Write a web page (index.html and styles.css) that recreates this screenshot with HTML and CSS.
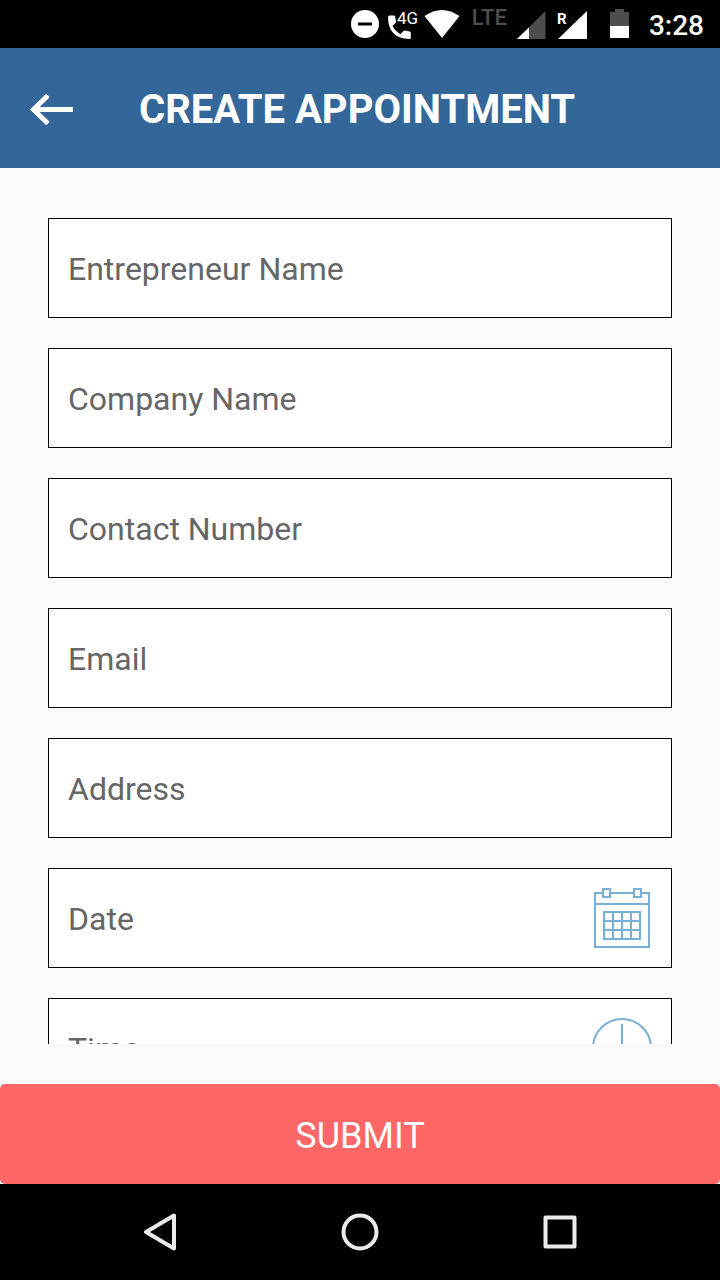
FILE: index.html
```html
<!DOCTYPE html>
<html lang="en">
<head>
<meta charset="utf-8">
<meta name="viewport" content="width=device-width, initial-scale=1">
<title>Create Appointment</title>
<link rel="stylesheet" href="styles.css">
</head>
<body>
<div class="app">
  <div class="status-bar">
    <svg class="icon" width="28" height="48" viewBox="0 0 28 48" aria-hidden="true">
      <circle cx="14" cy="24" r="14" fill="#fff"/>
      <path d="M7 24h14" stroke="#000" stroke-width="3"/>
    </svg>
    <svg class="icon" width="30" height="48" viewBox="0 0 30 48" aria-label="4G call">
      <path d="M2.500 15.500H7q1 0 1.100 1l.9 5q.1.900-.5 1.500l-3 3q3 5.500 8 8l3-3q.6-.6 1.500-.4l4.800 1q1 .2 1 1.200v5q0 1.200-1.200 1.200Q1 38.500 1 17q0-1.500 1.500-1.500Z" fill="#fff"/>
      <text class="tag-4g" x="10" y="24">4G</text>
    </svg>
    <svg class="icon" width="36" height="48" viewBox="0 0 36 48" aria-hidden="true">
      <path d="M17 38 -.5 16Q17 4 34.500 16Z" fill="#fff"/>
    </svg>
    <span class="network">LTE</span>
    <svg class="icon" width="29" height="48" viewBox="0 0 29 48" aria-hidden="true">
      <path d="M0 39 28.500 11V39Z" fill="#4d4d4d"/>
      <path d="M0 39 12 27.400V39Z" fill="#fff"/>
    </svg>
    <svg class="icon roaming" width="30" height="48" viewBox="0 0 30 48" aria-label="Roaming signal">
      <path d="M0 39 29 11V39Z" fill="#fff"/>
      <text class="tag-r" x="-1" y="24">R</text>
    </svg>
    <svg class="icon battery" width="20" height="48" viewBox="0 0 20 48" aria-hidden="true">
      <path d="M0 26V12H5V9H14V12H19V26Z" fill="#4d4d4d"/>
      <path d="M0 26H19V38H0Z" fill="#fff"/>
    </svg>
    <time class="clock">3:28</time>
  </div>

  <header class="toolbar">
    <button class="back" type="button" aria-label="Back">
      <svg class="icon" width="44" height="32" viewBox="0 0 44 32" aria-hidden="true">
        <path d="M43 15.500H4M18 1.500 3.500 15.500 18 29.500" fill="none" stroke="#fff" stroke-width="5"/>
      </svg>
    </button>
    <h1 class="title">CREATE APPOINTMENT</h1>
  </header>

  <form class="form">
    <div class="fields">
      <div class="field"><input class="input" type="text" placeholder="Entrepreneur Name" aria-label="Entrepreneur Name"></div>
      <div class="field"><input class="input" type="text" placeholder="Company Name" aria-label="Company Name"></div>
      <div class="field"><input class="input" type="tel" placeholder="Contact Number" aria-label="Contact Number"></div>
      <div class="field"><input class="input" type="email" placeholder="Email" aria-label="Email"></div>
      <div class="field"><input class="input" type="text" placeholder="Address" aria-label="Address"></div>
      <div class="field">
        <input class="input" type="text" placeholder="Date" aria-label="Date">
        <svg class="icon" width="60" height="60" viewBox="0 0 60 60" fill="none" stroke="#78afd7" stroke-width="2" aria-hidden="true">
          <path d="M10 5H3V59H57V5H49M18 5H41M3 16H57M11 1H18V9H11ZM42 1H49V9H42Z"/>
          <path d="M12 24H48V51H12ZM21 24V51M30 24V51M39 24V51M12 33H48M12 42H48"/>
        </svg>
      </div>
      <div class="field">
        <input class="input" type="text" placeholder="Time" aria-label="Time">
        <svg class="icon" width="60" height="60" viewBox="0 0 60 60" fill="none" stroke="#78afd7" stroke-width="2" aria-hidden="true">
          <circle cx="30" cy="30" r="29"/>
          <path d="M30 6V30H44"/>
        </svg>
      </div>
    </div>
    <button class="submit" type="submit">SUBMIT</button>
  </form>

  <nav class="nav-bar">
    <button class="nav-button" type="button" aria-label="Back">
      <svg class="icon" width="40" height="40" viewBox="0 0 40 40" fill="none" stroke="#ebebeb" stroke-width="4" stroke-linejoin="round" aria-hidden="true"><path d="M34 3.500V36.500L6 20Z"/></svg>
    </button>
    <button class="nav-button" type="button" aria-label="Home">
      <svg class="icon" width="40" height="40" viewBox="0 0 40 40" fill="none" stroke="#ebebeb" stroke-width="4" aria-hidden="true"><circle cx="20" cy="20" r="16.500"/></svg>
    </button>
    <button class="nav-button" type="button" aria-label="Recent apps">
      <svg class="icon" width="40" height="40" viewBox="0 0 40 40" fill="none" stroke="#ebebeb" stroke-width="4" stroke-linejoin="round" aria-hidden="true"><path d="M5.500 5.500H34.500V34.500H5.500Z"/></svg>
    </button>
  </nav>
</div>
</body>
</html>
```
FILE: styles.css
```css
* {
  box-sizing: border-box;
}

body {
  margin: 0;
  background: #fafafa;
  font-family: Roboto, "Liberation Sans", sans-serif;
}

button {
  border: 0;
  padding: 0;
  background: none;
  font: inherit;
  color: inherit;
  cursor: pointer;
}

.icon {
  display: block;
  flex: none;
  overflow: visible;
}

.app {
  display: flex;
  flex-direction: column;
  height: 100vh;
}

.status-bar {
  display: flex;
  flex: none;
  align-items: center;
  justify-content: flex-end;
  gap: 8px;
  height: 48px;
  padding-right: 16px;
  background: #000;
  color: #fff;
}

.tag-4g {
  fill: #fff;
  font-size: 17px;
}

.tag-r {
  fill: #fff;
  font-size: 15px;
  font-weight: 700;
}

.network {
  padding: 0 2px 12px 3px;
  color: #4d4d4d;
  font-size: 22px;
  font-weight: 500;
  line-height: 24px;
}

.roaming {
  margin-left: 4px;
}

.battery {
  margin: 0 11px 0 14px;
}

.clock {
  padding-top: 3px;
  font-size: 28px;
  font-weight: 500;
  line-height: 45px;
}

.toolbar {
  display: flex;
  flex: none;
  align-items: center;
  gap: 65px;
  height: 120px;
  padding: 4px 30px 0;
  background: #336699;
  color: #fff;
}

.title {
  margin: 0;
  font-size: 40px;
  font-weight: 700;
  line-height: 48px;
}

.form {
  display: flex;
  flex: 1;
  flex-direction: column;
  gap: 40px;
  min-height: 0;
}

.fields {
  display: flex;
  flex: 1;
  flex-direction: column;
  gap: 30px;
  min-height: 0;
  padding: 50px 48px;
  overflow-y: auto;
  scrollbar-width: none;
}

.field {
  display: flex;
  flex: none;
  align-items: center;
  height: 100px;
  padding: 0 19px;
  border: 1px solid #000;
  background: #fff;
}

.input {
  flex: 1;
  min-width: 0;
  height: 98px;
  padding: 2px 0 0;
  border: 0;
  outline: 0;
  background: none;
  color: #222;
  font: inherit;
  font-size: 32px;
}

.input::placeholder {
  color: #666;
  opacity: 1;
}

.submit {
  flex: none;
  height: 100px;
  padding-top: 4px;
  border-radius: 5px;
  background: #ff6666;
  color: #fff;
  font-size: 36px;
}

.nav-bar {
  display: flex;
  flex: none;
  height: 96px;
  padding: 0 60px;
  background: #000;
}

.nav-button {
  display: flex;
  flex: 1;
  align-items: center;
  justify-content: center;
}
```
